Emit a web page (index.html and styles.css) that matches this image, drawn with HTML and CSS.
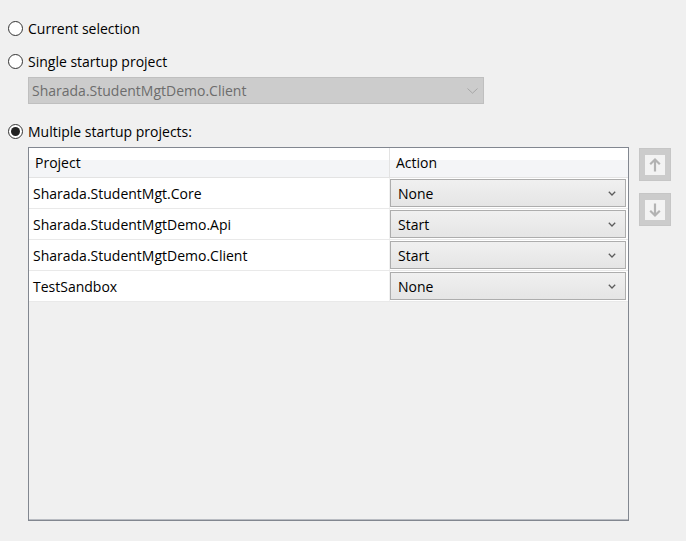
FILE: index.html
```html
<!DOCTYPE html>
<html>
<head>
<meta charset="utf-8">
<link rel="stylesheet" href="styles.css">
</head>
<body>
<div class="page">
  <label class="radio-row">
    <span class="radio"></span><span class="label">Current selection</span>
  </label>
  <label class="radio-row r2">
    <span class="radio"></span><span class="label">Single startup project</span>
  </label>
  <div class="combo combo-disabled">
    <span class="combo-text">Sharada.StudentMgtDemo.Client</span>
    <svg class="chev-big" width="11" height="6" viewBox="0 0 11 6"><path d="M0.5 0.5 L5.5 5.2 L10.5 0.5" fill="none" stroke="#a6a6a6" stroke-width="1"/></svg>
  </div>
  <label class="radio-row r3">
    <span class="radio checked"></span><span class="label">Multiple startup projects:</span>
  </label>
  <div class="multi">
    <div class="grid">
      <div class="header">
        <div class="hcell c1">Project</div>
        <div class="hcell c2">Action</div>
      </div>
      <div class="row">
        <div class="cell c1">Sharada.StudentMgt.Core</div>
        <div class="cell c2"><div class="combo combo-action"><span class="combo-text">None</span><svg class="chev" width="8" height="5" viewBox="0 0 8 5"><path d="M0.8 0.8 L4 4 L7.2 0.8" fill="none" stroke="#5c5c5c" stroke-width="1.3"/></svg></div></div>
      </div>
      <div class="row">
        <div class="cell c1">Sharada.StudentMgtDemo.Api</div>
        <div class="cell c2"><div class="combo combo-action"><span class="combo-text">Start</span><svg class="chev" width="8" height="5" viewBox="0 0 8 5"><path d="M0.8 0.8 L4 4 L7.2 0.8" fill="none" stroke="#5c5c5c" stroke-width="1.3"/></svg></div></div>
      </div>
      <div class="row">
        <div class="cell c1">Sharada.StudentMgtDemo.Client</div>
        <div class="cell c2"><div class="combo combo-action"><span class="combo-text">Start</span><svg class="chev" width="8" height="5" viewBox="0 0 8 5"><path d="M0.8 0.8 L4 4 L7.2 0.8" fill="none" stroke="#5c5c5c" stroke-width="1.3"/></svg></div></div>
      </div>
      <div class="row">
        <div class="cell c1">TestSandbox</div>
        <div class="cell c2"><div class="combo combo-action"><span class="combo-text">None</span><svg class="chev" width="8" height="5" viewBox="0 0 8 5"><path d="M0.8 0.8 L4 4 L7.2 0.8" fill="none" stroke="#5c5c5c" stroke-width="1.3"/></svg></div></div>
      </div>
    </div>
    <div class="buttons">
      <div class="btn"><span class="btn-face">
        <svg width="20" height="20" viewBox="0 0 20 20"><path d="M10 4.5 V16.5 M5.2 9.3 L10 4.5 L14.8 9.3" fill="none" stroke="#b3b3b3" stroke-width="2.2"/></svg>
      </span></div>
      <div class="btn"><span class="btn-face">
        <svg width="20" height="20" viewBox="0 0 20 20"><path d="M10 3.5 V15.5 M5.2 10.7 L10 15.5 L14.8 10.7" fill="none" stroke="#b3b3b3" stroke-width="2.2"/></svg>
      </span></div>
    </div>
  </div>
</div>
</body>
</html>
```

FILE: styles.css
```css
html, body {
  margin: 0;
  padding: 0;
}
body {
  background: #f0f0f0;
  font-family: "Open Sans", "Noto Sans", sans-serif;
  font-size: 14px;
  color: #000;
  width: 686px;
  height: 541px;
  overflow: hidden;
}
.page {
  padding-top: 17px;
}
.radio-row {
  display: flex;
  align-items: center;
  height: 22px;
  padding-left: 8px;
  gap: 5px;
}
.radio {
  width: 15px;
  height: 15px;
  box-sizing: border-box;
  border: 1px solid #333;
  border-radius: 50%;
  background: #fff;
  display: flex;
  align-items: center;
  justify-content: center;
}
.radio.checked::after {
  content: "";
  width: 9px;
  height: 9px;
  border-radius: 50%;
  background: #222;
}
.r2 {
  margin-top: 11px;
}
.r3 {
  margin-top: 16px;
}
.combo {
  display: flex;
  align-items: center;
  justify-content: space-between;
  box-sizing: border-box;
}
.combo-disabled {
  margin: 5px 0 0 28px;
  width: 456px;
  height: 27px;
  background: #cccccc;
  border: 1px solid #bfbfbf;
  padding: 0 5px 0 3px;
  color: #6d6d6d;
}
.multi {
  display: flex;
  margin: 5px 0 0 28px;
  gap: 10px;
}
.grid {
  width: 601px;
  height: 374px;
  box-sizing: border-box;
  border: 1px solid #828790;
  box-shadow: inset 0 -1px 0 #b9bcc2;
}
.header {
  display: flex;
  height: 30px;
  box-sizing: border-box;
  border-bottom: 1px solid #e3e3e3;
  background: linear-gradient(#ffffff 0, #ffffff 40%, #f4f5f7 40%, #f4f5f7 100%);
}
.hcell {
  display: flex;
  align-items: center;
  padding-left: 6px;
  box-sizing: border-box;
}
.c1 {
  width: 360px;
}
.c2 {
  width: 239px;
  border-left: 1px solid #e3e3e3;
}
.row {
  display: flex;
  height: 31px;
  box-sizing: border-box;
  border-bottom: 1px solid #e9e9e9;
  background: #fff;
}
.cell.c1 {
  display: flex;
  align-items: center;
  padding-left: 4px;
  box-sizing: border-box;
}
.cell.c2 {
  border-left: 1px solid #f0f0f0;
  padding: 1px 2px 1px 0;
  box-sizing: border-box;
}
.combo-action {
  height: 28px;
  border: 1px solid #adadad;
  background: linear-gradient(#f0f0f0, #e5e5e5);
  padding: 0 9px 0 7px;
}
.chev {
  margin-top: 1px;
}
.buttons {
  display: flex;
  flex-direction: column;
  gap: 12px;
  padding-top: 1px;
}
.btn {
  width: 32px;
  height: 33px;
  box-sizing: border-box;
  background: #cccccc;
  border: 1px solid #c6c6c6;
  display: flex;
  align-items: center;
  justify-content: center;
}
.btn-face {
  width: 20px;
  height: 20px;
  background: #f3f3f3;
  display: block;
}
.btn-face svg {
  display: block;
}
```
